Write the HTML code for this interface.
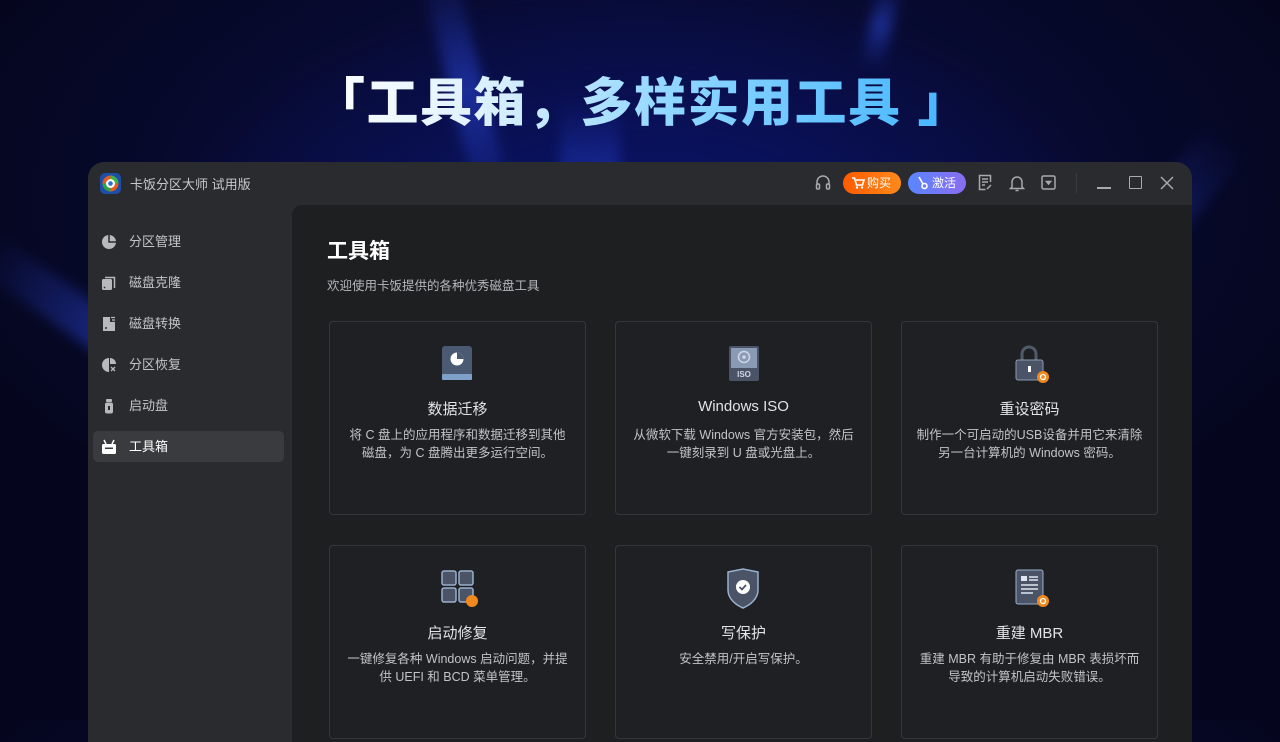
<!DOCTYPE html>
<html><head><meta charset="utf-8"><style>
*{margin:0;padding:0;box-sizing:border-box}
body{width:1280px;height:720px;overflow:hidden;position:relative;font-family:"Liberation Sans","Noto Sans CJK SC",sans-serif;
background:radial-gradient(ellipse 500px 300px at 640px 280px,#0d1a8a 0%,rgba(10,20,110,0.6) 40%,rgba(6,8,40,0) 100%),radial-gradient(ellipse 900px 500px at 640px 200px,#0a0f4a,#05061e 80%);}
.beam{position:absolute;background:linear-gradient(rgba(40,70,220,0.0),rgba(45,75,230,0.5),rgba(40,70,220,0));filter:blur(6px)}
.title{position:absolute;left:313px;top:71px;font-size:52px;font-weight:900;letter-spacing:1.5px;white-space:nowrap;
background:linear-gradient(90deg,#ffffff 0%,#dff2ff 25%,#8fd6ff 55%,#40b4ff 100%);-webkit-background-clip:text;background-clip:text;color:transparent;line-height:66px}
.win{position:absolute;left:88px;top:162px;width:1104px;height:580px;background:#2a2b2e;border-radius:16px 16px 0 0;overflow:hidden}
.tb{height:43px;position:relative;color:#c8c9cc;font-size:13px}
.logo{position:absolute;left:12px;top:11px;width:21px;height:21px;border-radius:5px;background:#1d4ea8}
.apptitle{position:absolute;left:42px;top:12px}
.ic{position:absolute;top:12px}
.btn{position:absolute;top:10px;height:22px;border-radius:11px;color:#fff;font-size:12px;line-height:22px;padding-left:24px;width:58px}
.side{position:absolute;left:0;top:43px;width:204px}
.item{position:absolute;left:5px;width:191px;height:31px;border-radius:5px;color:#c4c5c8;font-size:13px;line-height:31px;padding-left:36px}
.item svg{position:absolute;left:8px;top:8px}
.main{position:absolute;left:204px;top:43px;width:900px;height:540px;background:#1e1f21;border-radius:10px 0 0 0}
h1{position:absolute;left:35px;top:30px;font-size:21px;color:#fff;font-weight:700}
.sub{position:absolute;left:35px;top:70px;font-size:12.5px;color:#b5b6b9}
.card{position:absolute;width:257px;height:194px;border:1px solid #35363a;border-radius:4px;background:#1f2023;text-align:center}
.card svg{position:absolute;left:110px;top:22px}
.ct{position:absolute;top:76px;left:0;right:0;font-size:15px;color:#e2e3e5}
.cd{position:absolute;top:104px;left:14px;right:14px;font-size:12.5px;color:#c2c3c6;line-height:18px}
</style></head><body>
<div class="beam" style="left:100px;top:180px;width:40px;height:330px;transform:rotate(-55deg)"></div>
<div class="beam" style="left:450px;top:-40px;width:34px;height:260px;transform:rotate(-14deg)"></div>
<div class="beam" style="left:870px;top:-20px;width:22px;height:90px;transform:rotate(14deg)"></div>
<div class="beam" style="left:1110px;top:100px;width:50px;height:300px;transform:rotate(40deg);opacity:.7"></div>
<div class="beam" style="left:560px;top:100px;width:60px;height:140px;opacity:.7"></div>
<div class="title">「工具箱，多样实用工具 」</div>
<div class="win">
 <div class="tb">
  <div class="logo"><svg width="21" height="21" viewBox="0 0 21 21"><circle cx="10.5" cy="10.5" r="8" fill="#e85a1e"/><path d="M10.5 2.5a8 8 0 0 1 8 8h-8z" fill="#3cb44a"/><path d="M2.5 10.5a8 8 0 0 0 8 8v-8z" fill="#2aa34a"/><circle cx="10.5" cy="10.5" r="4.5" fill="#fff"/><circle cx="10.5" cy="10.5" r="2.3" fill="#2a6fd0"/></svg></div>
  <div class="apptitle">卡饭分区大师 试用版</div>
  <svg class="ic" style="left:727px" width="16" height="18" viewBox="0 0 16 18" fill="none" stroke="#a8a9ad" stroke-width="1.5"><path d="M2 11V8a6 6 0 0 1 12 0v3"/><rect x="1.5" y="10" width="3" height="5" rx="1"/><rect x="11.5" y="10" width="3" height="5" rx="1"/></svg>
  <div class="btn" style="left:755px;background:linear-gradient(90deg,#ff5a00,#ff8a1a)"><svg style="position:absolute;left:9px;top:5px" width="13" height="12" viewBox="0 0 13 12"><path d="M0 1h2.5l2 7h6l1.5-5H4" fill="none" stroke="#fff" stroke-width="1.6"/><circle cx="5" cy="10.5" r="1.2" fill="#fff"/><circle cx="10" cy="10.5" r="1.2" fill="#fff"/></svg>购买</div>
  <div class="btn" style="left:820px;background:linear-gradient(90deg,#5a86ff,#8a6cf0)"><svg style="position:absolute;left:9px;top:4px" width="12" height="14" viewBox="0 0 12 14" fill="none" stroke="#fff" stroke-width="1.6"><path d="M2 1l4 7"/><circle cx="7.5" cy="10" r="2.5"/></svg>激活</div>
  <svg class="ic" style="left:890px" width="14" height="17" viewBox="0 0 14 17" fill="none" stroke="#a8a9ad" stroke-width="1.5"><path d="M12.5 8V1.5h-11v14h6"/><path d="M4 5h6M4 8h6M4 11h3M9 15l4-4"/></svg>
  <svg class="ic" style="left:921px" width="16" height="18" viewBox="0 0 16 18" fill="none" stroke="#a8a9ad" stroke-width="1.5"><path d="M3 13V8a5 5 0 0 1 10 0v5l1.5 1.5h-13z"/><path d="M6.5 16.5h3"/></svg>
  <svg class="ic" style="left:953px;top:13px" width="15" height="15" viewBox="0 0 15 15" fill="none" stroke="#a8a9ad" stroke-width="1.5"><rect x="1" y="1" width="13" height="13" rx="1.5"/><path d="M5.5 6.5h4l-2 2.5z" fill="#a8a9ad"/></svg>
  <div style="position:absolute;left:988px;top:11px;width:1px;height:20px;background:#3a3b3f"></div>
  <div style="position:absolute;left:1009px;top:25px;width:14px;height:1.5px;background:#a8a9ad"></div>
  <div style="position:absolute;left:1041px;top:14px;width:13px;height:13px;border:1.5px solid #a8a9ad;border-radius:1px"></div>
  <svg class="ic" style="left:1072px;top:14px" width="14" height="14" viewBox="0 0 14 14" stroke="#a8a9ad" stroke-width="1.5"><path d="M1 1l12 12M13 1L1 13"/></svg>
 </div>
 <div class="side">
  <div class="item" style="top:21px"><svg width="16" height="16" viewBox="0 0 16 16"><circle cx="8" cy="8" r="7" fill="#b8b9be"/><path d="M8 1v7h7" fill="none" stroke="#2a2b2e" stroke-width="1.5"/></svg>分区管理</div>
  <div class="item" style="top:62px"><svg width="16" height="16" viewBox="0 0 16 16"><rect x="1" y="4" width="10" height="11" rx="1.5" fill="#b8b9be"/><path d="M4 2.5h9.5V13" fill="none" stroke="#b8b9be" stroke-width="1.5"/><circle cx="3.5" cy="12.5" r=".9" fill="#2a2b2e"/></svg>磁盘克隆</div>
  <div class="item" style="top:103px"><svg width="16" height="16" viewBox="0 0 16 16"><path d="M2 1h7v5h5v9H2z" fill="#b8b9be"/><path d="M10 1.5h4M11 4h3M11 6.5h3" stroke="#b8b9be" stroke-width="1.3"/><circle cx="5" cy="12" r="1" fill="#2a2b2e"/></svg>磁盘转换</div>
  <div class="item" style="top:144px"><svg width="16" height="16" viewBox="0 0 16 16"><path d="M8 1a7 7 0 1 0 0 14z" fill="#b8b9be"/><path d="M9 1a6 6 0 0 1 6 6H9z" fill="#b8b9be"/><path d="M10 10l4 4M10 14l4-4" stroke="#b8b9be" stroke-width="1.3"/></svg>分区恢复</div>
  <div class="item" style="top:185px"><svg width="16" height="16" viewBox="0 0 16 16"><rect x="5" y="1" width="6" height="3" rx="1" fill="#b8b9be"/><rect x="4" y="4.5" width="8" height="11" rx="2" fill="#b8b9be"/><rect x="7" y="8" width="2" height="4" fill="#2a2b2e"/></svg>启动盘</div>
  <div class="item" style="top:226px;background:#3a3b3f;color:#fff"><svg width="16" height="16" viewBox="0 0 16 16"><path d="M3 1l2 4M13 1l-2 4" stroke="#fff" stroke-width="1.5"/><rect x="1" y="5" width="14" height="10" rx="1.5" fill="#fff"/><rect x="4" y="8.5" width="8" height="1.5" fill="#3a3b3f"/></svg>工具箱</div>
 </div>
 <div class="main">
  <h1>工具箱</h1>
  <div class="sub">欢迎使用卡饭提供的各种优秀磁盘工具</div>

  <div class="card" style="left:37px;top:116px">
   <svg width="34" height="40" viewBox="0 0 34 40"><rect x="2" y="2" width="30" height="34" rx="3" fill="#4a5a72"/><rect x="2" y="30" width="30" height="6" rx="1" fill="#7fa0c8"/><circle cx="17" cy="15" r="6.5" fill="#fff"/><path d="M17 15V8.5a6.5 6.5 0 0 1 6.5 6.5z" fill="#4a5a72"/></svg>
   <div class="ct">数据迁移</div><div class="cd">将 C 盘上的应用程序和数据迁移到其他磁盘，为 C 盘腾出更多运行空间。</div></div>
  <div class="card" style="left:323px;top:116px">
   <svg width="34" height="40" viewBox="0 0 34 40"><rect x="3" y="2" width="30" height="35" rx="2" fill="#4a5466"/><rect x="5" y="4" width="26" height="20" fill="#8b9ab4"/><circle cx="18" cy="13" r="5.5" fill="none" stroke="#cdd6e4" stroke-width="1.5"/><circle cx="18" cy="13" r="1.8" fill="#cdd6e4"/><text x="18" y="33" font-size="8" font-weight="700" fill="#cdd6e4" text-anchor="middle" font-family="Liberation Sans">ISO</text></svg>
   <div class="ct">Windows ISO</div><div class="cd">从微软下载 Windows 官方安装包，然后一键刻录到 U 盘或光盘上。</div></div>
  <div class="card" style="left:609px;top:116px">
   <svg width="40" height="40" viewBox="0 0 40 40"><path d="M10 16V10a7 7 0 0 1 14 0v6" fill="none" stroke="#505a6a" stroke-width="3"/><rect x="4" y="16" width="27" height="20" rx="2" fill="#4a5466" stroke="#8b9ab4"/><rect x="16" y="22" width="3" height="6" fill="#fff"/><circle cx="31" cy="33" r="6" fill="#f08a1e"/><circle cx="31" cy="33" r="2.5" fill="none" stroke="#fff" stroke-width="1.3"/></svg>
   <div class="ct">重设密码</div><div class="cd">制作一个可启动的USB设备并用它来清除另一台计算机的 Windows 密码。</div></div>
  <div class="card" style="left:37px;top:340px">
   <svg width="40" height="40" viewBox="0 0 40 40" fill="#4a5466" stroke="#9ab0cc" stroke-width="1.5"><rect x="2" y="3" width="14" height="14" rx="2"/><rect x="19" y="3" width="14" height="14" rx="2"/><rect x="2" y="20" width="14" height="14" rx="2"/><rect x="19" y="20" width="14" height="14" rx="2"/><circle cx="32" cy="33" r="6" fill="#f08a1e" stroke="none"/></svg>
   <div class="ct">启动修复</div><div class="cd">一键修复各种 Windows 启动问题，并提供 UEFI 和 BCD 菜单管理。</div></div>
  <div class="card" style="left:323px;top:340px">
   <svg width="40" height="42" viewBox="0 0 40 42"><path d="M2 4l15-3 15 3v18c0 9-8 15-15 18C10 37 2 31 2 22z" fill="#4a5466" stroke="#9ab0cc" stroke-width="1.5"/><circle cx="17" cy="19" r="7" fill="#fff"/><path d="M13.5 19l2.5 2.5 4-4.5" fill="none" stroke="#4a5466" stroke-width="1.8"/></svg>
   <div class="ct">写保护</div><div class="cd">安全禁用/开启写保护。</div></div>
  <div class="card" style="left:609px;top:340px">
   <svg width="40" height="40" viewBox="0 0 40 40"><rect x="4" y="2" width="27" height="34" rx="2" fill="#4a5466" stroke="#9ab0cc"/><rect x="9" y="8" width="6" height="5" fill="#dfe6f0"/><path d="M17 9h9M17 12h9M9 17h17M9 21h17M9 25h12" stroke="#dfe6f0" stroke-width="1.4"/><circle cx="31" cy="33" r="6" fill="#f08a1e"/><circle cx="31" cy="33" r="2.5" fill="none" stroke="#fff" stroke-width="1.3"/></svg>
   <div class="ct">重建 MBR</div><div class="cd">重建 MBR 有助于修复由 MBR 表损坏而导致的计算机启动失败错误。</div></div>
 </div>
</div>
</body></html>
